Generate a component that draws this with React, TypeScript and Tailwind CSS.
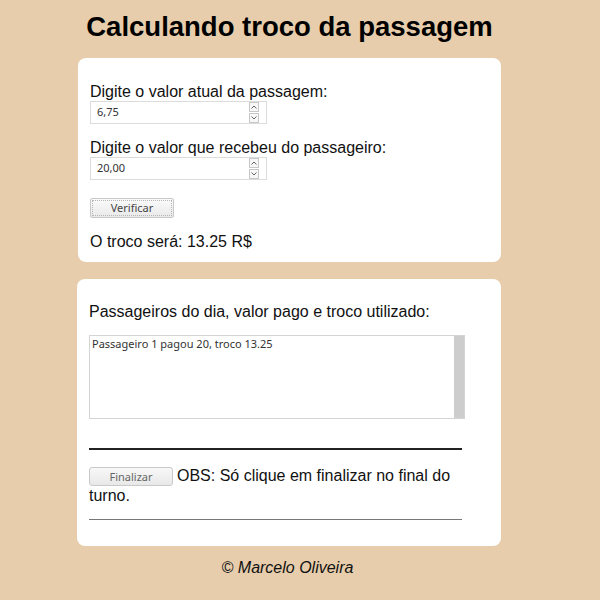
import { useState } from 'react';

const Spinner = () => (
  <div className="flex flex-col gap-px">
    <div className="w-[10px] h-[10px] border border-[#c8c8c8] bg-[#f7f7f7] flex items-center justify-center">
      <svg width="6" height="4" viewBox="0 0 6 4">
        <path d="M0.5 3.5 L3 1 L5.5 3.5" fill="none" stroke="#666" strokeWidth="1" />
      </svg>
    </div>
    <div className="w-[10px] h-[10px] border border-[#c8c8c8] bg-[#f7f7f7] flex items-center justify-center">
      <svg width="6" height="4" viewBox="0 0 6 4">
        <path d="M0.5 0.5 L3 3 L5.5 0.5" fill="none" stroke="#666" strokeWidth="1" />
      </svg>
    </div>
  </div>
);

const NumberField = ({ value }: { value: string }) => (
  <div className="w-[177px] h-[23px] border border-[#dcdcdc] bg-white flex items-center justify-between pl-[6px] pr-[7px]">
    <span className="text-[11px] text-[#333] font-['Noto_Sans',sans-serif]">{value}</span>
    <Spinner />
  </div>
);

const App = () => {
  const [log] = useState(['Passageiro 1 pagou 20, troco 13.25']);

  return (
    <div className="min-h-[600px] bg-[#e7cdab] font-['Liberation_Sans',Arial,sans-serif] text-[#111]">
      <div className="ml-[78px] w-[423px] pt-[11px]">
        <h1 className="text-center text-[27.5px] leading-[32px] font-bold text-black">
          Calculando troco da passagem
        </h1>

        <div className="mt-[15px] bg-white rounded-[8px] pl-[12px] pt-[25px] pb-[11px] h-[204px]">
          <p className="text-[16px] leading-[18px]">Digite o valor atual da passagem:</p>
          <NumberField value="6,75" />
          <p className="text-[16px] leading-[18px] mt-[15px]">Digite o valor que recebeu do passageiro:</p>
          <NumberField value="20,00" />
          <div className="mt-[18px] w-[84px] h-[20px] rounded-[2px] border border-[#c9c9c9] bg-gradient-to-b from-[#fbfbfb] to-[#e9e9e9] p-px">
            <div className="w-full h-full border border-dotted border-[#b5b5b5] flex items-center justify-center text-[11px] text-[#444] font-['Noto_Sans',sans-serif]">
              Verificar
            </div>
          </div>
          <p className="text-[16px] leading-[18px] mt-[15px]">O troco será: 13.25 R$</p>
        </div>

        <div className="mt-[17px] -ml-px bg-white rounded-[8px] pl-[12px] pt-[24px] h-[267px]">
          <p className="text-[16px] leading-[18px]">Passageiros do dia, valor pago e troco utilizado:</p>
          <div className="mt-[14px] w-[376px] h-[84px] border border-[#d4d4d4] flex">
            <div className="flex-1 px-[2px] pt-[1px] text-[11px] leading-[14px] text-[#333] font-['Noto_Sans',sans-serif]">
              {log.map((l) => (
                <div key={l}>{l}</div>
              ))}
            </div>
            <div className="w-[10px] h-full bg-[#cdcdcd]" />
          </div>
          <div className="mt-[29px] w-[373px] h-[1.5px] bg-[#222]" />
          <div className="mt-[16px] w-[373px] text-[16px] leading-[19px]">
            <span className="inline-block align-middle mr-[4px] w-[84px] h-[19px] rounded-[3px] border border-[#c9c9c9] bg-gradient-to-b from-[#f8f8f8] to-[#e8e8e8] text-center text-[11px] leading-[17px] text-[#666] font-['Noto_Sans',sans-serif]">
              Finalizar
            </span>
            <span>OBS: Só clique em finalizar no final do turno.</span>
          </div>
          <div className="mt-[14px] w-[373px] h-px bg-[#777]" />
        </div>

        <p className="mt-[12px] text-center italic text-[16px] leading-[19px] mr-[4px]">© Marcelo Oliveira</p>
      </div>
    </div>
  );
};

export default App;
